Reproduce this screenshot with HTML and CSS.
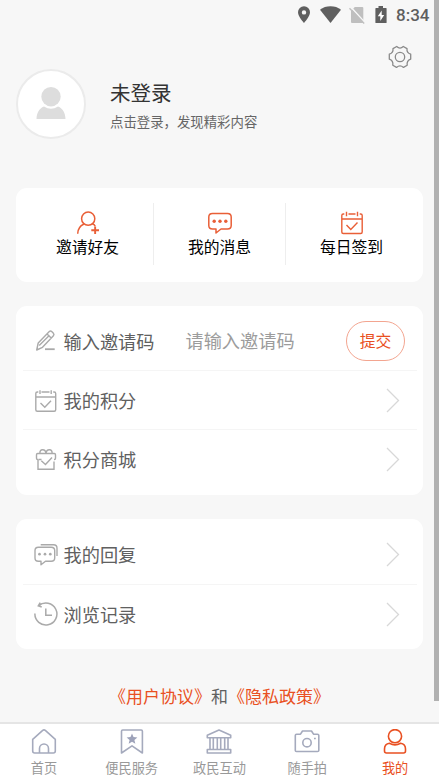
FILE: index.html
```html
<!DOCTYPE html>
<html lang="zh-CN">
<head>
<meta charset="UTF-8">
<meta name="viewport" content="width=device-width, initial-scale=1">
<title>我的</title>
<link rel="stylesheet" href="styles.css">
</head>
<body>
<div class="app">
  <header class="status">
    <svg class="s-pin" width="12" height="18" viewBox="0 0 12 18"><path fill="#5f5f5f" fill-rule="evenodd" d="M6 .3A6 6 0 0 0 0 6.300C0 10.500 6 17 6 17S12 10.500 12 6.300A6 6 0 0 0 6 .3ZM6 4.200A2.200 2.200 0 1 1 6 8.600A2.200 2.200 0 0 1 6 4.200Z"/></svg>
    <svg class="s-wifi" width="21" height="18" viewBox="0 0 21 18"><path fill="#5f5f5f" d="M10.500 17 0 3.700Q4.500.3 10.500.3T21 3.700Z"/></svg>
    <svg class="s-sim" width="16" height="18" viewBox="0 0 16 18"><path fill="#bfbfbf" d="M5.800 1H13.300Q14.300 1 14.300 2V16Q14.300 17 13.300 17H3Q2 17 2 16V5Z"/><path stroke="#f7f7f7" stroke-width="1.500" d="m1.800 1 14 15.300"/><path stroke="#bfbfbf" stroke-width="1.300" d="m.5 2.200 14.700 15.300"/></svg>
    <svg class="s-battery" width="12" height="18" viewBox="0 0 12 18"><path fill="#5f5f5f" d="M3.500 0h4.500v2H11q.6 0 .6.600V16.400q0 .6-.6.600H1q-.6 0-.6-.6V2.600Q.4 2 1 2h2.500Z"/><path fill="#fff" d="M6.700 4.500 2.800 10.200H5.300V15L9.200 8.900H6.700Z"/></svg>
    <span class="clock">8:34</span>
  </header>

  <main>
    <div class="tools">
      <svg width="26" height="26" viewBox="-13 -13 26 26" fill="none" stroke="#8a8a8a" stroke-width="1.300" stroke-linejoin="round"><path d="M-3.300-10.500Q0-7.300 3.300-10.500L7-8.400Q6.500-4.200 10.700-2.800V2.200Q6.500 3.800 7.200 8.200L3.500 10.400Q0 7.300-3.500 10.400L-7.200 8.200Q-6.500 3.800-10.700 2.200V-2.800Q-6.500-4.200-7-8.400Z"/><circle r="4.700"/></svg>
    </div>

    <section class="profile">
      <div class="avatar">
        <svg width="30" height="32" viewBox="0 0 30 32" fill="#ddd"><circle cx="15" cy="9.700" r="9.700"/><path d="M8 19.500Q15 24 22 19.500C27 21.500 29.300 26 29.500 32H.5C.7 26 3 21.500 8 19.500Z"/></svg>
      </div>
      <div class="who"><h1>未登录</h1><p>点击登录，发现精彩内容</p></div>
    </section>

    <section class="card actions">
      <a class="action">
        <svg width="24" height="24" viewBox="0 0 24 24" fill="none" stroke="#e95f37" stroke-width="1.500"><circle cx="12.200" cy="7.700" r="6.600"/><path d="M1.700 22.800C1.700 17.500 4.200 14.800 8 13M16.200 12.800Q18.500 13.300 19.200 15.200"/><path stroke-width="1.900" d="M15.300 19.200H23M19.150 15.500V23"/></svg>
        <span>邀请好友</span>
      </a>
      <a class="action">
        <svg width="24" height="24" viewBox="0 0 24 24" fill="none" stroke="#e95f37" stroke-width="1.500" stroke-linejoin="round"><path d="M4.500 2.500H19.500Q23.200 2.500 23.200 6V14.500Q23.200 18 19.500 18H13L8 22V18H4.500Q.8 18 .8 14.500V6Q.8 2.500 4.500 2.500Z"/><g fill="#e95f37" stroke="none"><circle cx="6.200" cy="10.200" r="1.700"/><circle cx="12" cy="10.200" r="1.700"/><circle cx="17.800" cy="10.200" r="1.700"/></g></svg>
        <span>我的消息</span>
      </a>
      <a class="action">
        <svg width="24" height="24" viewBox="0 0 24 24" fill="none" stroke="#e95f37" stroke-width="1.400"><path d="M4.300 3H3.300Q1.800 3 1.800 4.500V21Q1.800 22.500 3.300 22.500H20.700Q22.200 22.500 22.200 21V4.500Q22.200 3 20.700 3H19.700M8.500 3H15.500M1.800 8H22.200M6.500.8V5.200M17.500.8V5.200"/><path d="M6.500 14 10.800 18.500 17.500 11.500"/></svg>
        <span>每日签到</span>
      </a>
    </section>

    <section class="card list">
      <div class="row invite">
        <svg class="icon" width="24" height="24" viewBox="0 0 24 24" fill="none" stroke="#aaa" stroke-width="1.400" stroke-linejoin="round"><path d="M2.700 21 4.200 14 15.300 2.600Q16.500 1.500 17.700 2.600L19.400 4.300Q20.500 5.500 19.400 6.700L8.500 18.300 2.700 21ZM13 5 17.200 9.100M5.200 16.500 15.500 6.300"/><path stroke-width="1.800" d="M11 20.200H20.700"/></svg>
        <span class="label">输入邀请码</span>
        <input class="code" type="text" placeholder="请输入邀请码">
        <button class="submit" type="button">提交</button>
      </div>
      <div class="row">
        <svg class="icon" width="24" height="24" viewBox="0 0 24 24" fill="none" stroke="#aaa" stroke-width="1.400"><path d="M4.300 3H3.300Q1.800 3 1.800 4.500V20.700Q1.800 22.200 3.300 22.200H20.200Q21.700 22.200 21.700 20.700V4.500Q21.700 3 20.200 3H19.200M7.500 3H15.500M1.800 8H21.700M6 1.200V5M17.200 1.200V5"/><path d="M6.500 14 10.800 18.300 17 11.700"/></svg>
        <span class="label">我的积分</span>
        <svg class="chevron" width="14" height="25" viewBox="0 0 14 25"><path d="M1 1 12.500 12.500 1 24"/></svg>
      </div>
      <div class="row">
        <svg class="icon" width="24" height="24" viewBox="0 0 24 24" fill="none" stroke="#aaa" stroke-width="1.400"><path d="M4 11.500H3.700Q2.500 11.500 2.500 10.300V6.700Q2.500 5.500 3.700 5.500H20.300Q21.500 5.500 21.500 6.700V10.300Q21.500 11.500 20.300 11.500H20M6 5.500C5 .8 11.500.2 12 5.500C12.500.2 19 .8 18 5.500M4.500 11.500H7.500M4 11.500V21.200H20V13.500"/><path d="M7.300 12.700 11.500 16.500 18 9.500"/></svg>
        <span class="label">积分商城</span>
        <svg class="chevron" width="14" height="25" viewBox="0 0 14 25"><path d="M1 1 12.500 12.500 1 24"/></svg>
      </div>
    </section>

    <section class="card list">
      <div class="row">
        <svg class="icon" width="24" height="24" viewBox="0 0 24 24" fill="none" stroke="#aaa" stroke-width="1.400" stroke-linejoin="round"><path d="M4.300 4.200H17.200Q20.700 4.200 20.700 7.500V15Q20.700 18.200 17.200 18.200H11.500L7 21.700V18.200H4.300Q1 18.200 1 15V7.500Q1 4.200 4.300 4.200ZM6.700 1.800H19.500Q23 1.800 23 5.200V13"/><g fill="#aaa" stroke="none"><circle cx="5.500" cy="11.200" r="1.350"/><circle cx="11" cy="11.200" r="1.350"/><circle cx="16.300" cy="11.200" r="1.350"/></g></svg>
        <span class="label">我的回复</span>
        <svg class="chevron" width="14" height="25" viewBox="0 0 14 25"><path d="M1 1 12.500 12.500 1 24"/></svg>
      </div>
      <div class="row">
        <svg class="icon" width="24" height="24" viewBox="0 0 24 24" fill="none" stroke="#aaa" stroke-width="1.500"><path d="M.9 11.500A11 11 0 1 0 4.800 3.600M7.600 1.900A11 11 0 0 0 4.800 3.600M6.200.7 4.300 3.800 7.700 5M11.800 6.500V13.200H18"/></svg>
        <span class="label">浏览记录</span>
        <svg class="chevron" width="14" height="25" viewBox="0 0 14 25"><path d="M1 1 12.500 12.500 1 24"/></svg>
      </div>
    </section>

    <p class="legal"><a>《用户协议》</a>和<a>《隐私政策》</a></p>
  </main>

  <nav class="tabs">
    <a class="tab">
      <svg width="26" height="26" viewBox="0 0 26 26"><path d="M1.700 10.300 11.700 1.400Q13 .3 14.300 1.400L24.300 10.300V22Q24.300 24 22.300 24H3.700Q1.700 24 1.700 22ZM8.500 24V19.500A4.500 4.500 0 0 1 17.500 19.500V24"/></svg>
      <span>首页</span>
    </a>
    <a class="tab">
      <svg width="26" height="26" viewBox="0 0 26 26"><path d="M3.700 1H22.200Q23.400 1 23.400 2.200V24L13 16.800 2.500 24V2.200Q2.500 1 3.700 1Z"/><path fill="#9da2b9" stroke="none" d="m13 4.500 1.500 3.600 3.900.3-3 2.500.95 3.800L13 12.700 9.650 14.700l.95-3.800L7.600 8.400l3.900-.3Z"/></svg>
      <span>便民服务</span>
    </a>
    <a class="tab">
      <svg width="26" height="26" viewBox="0 0 26 26"><path d="M1.300 6.300 13 1 24.700 6.300V8.800H1.300ZM1.300 20.500H24.700V24H1.300ZM4 9V20.500M7.300 9V20.500M11.300 9V20.500M14.700 9V20.500M18.700 9V20.500M22 9V20.500"/></svg>
      <span>政民互动</span>
    </a>
    <a class="tab">
      <svg width="26" height="26" viewBox="0 0 26 26"><path d="M2.500 5.200H6.500L8.500 2H17.500L19.500 5.200H23.500Q24.800 5.200 24.800 6.500V21.500Q24.800 22.500 23.500 22.500H2.500Q1.300 22.500 1.300 21.500V6.500Q1.300 5.200 2.500 5.200Z"/><circle cx="13" cy="13.700" r="4.200"/><path d="M20 9.500H21.800"/></svg>
      <span>随手拍</span>
    </a>
    <a class="tab active">
      <svg width="26" height="26" viewBox="0 0 26 26"><circle cx="13" cy="7.200" r="6.600"/><path d="M7.500 14.200Q13 17.500 18.500 14.200Q23.500 15 23.500 20V22Q23.500 24 21.500 24H4.500Q2.500 24 2.500 22V20Q2.500 15 7.500 14.200Z"/></svg>
      <span>我的</span>
    </a>
  </nav>
  <div class="scrollbar"></div>
</div>
</body>
</html>
```
FILE: styles.css
```css
* { box-sizing: border-box; }

body {
  margin: 0;
  background: #f7f7f7;
  font-family: "Noto Sans CJK SC", sans-serif;
  color: #606060;
}

h1, p { margin: 0; font-weight: 400; }
svg { display: block; flex: none; }

.app {
  position: relative;
  height: 780px;
  display: flex;
  flex-direction: column;
  overflow: hidden;
}

.status {
  height: 30px;
  padding: 6px 9px 0 0;
  display: flex;
  justify-content: flex-end;
  align-items: flex-start;
}
.s-wifi { margin-left: 10px; }
.s-sim { margin-left: 8px; }
.s-battery { margin-left: 10px; }
.clock {
  width: 34px;
  margin: -1px 0 0 9px;
  font: 500 17px/20px Roboto, sans-serif;
  color: #5f5f5f;
  white-space: nowrap;
}

main {
  flex: 1;
  min-height: 0;
  padding: 0 16px;
}

.tools {
  height: 39px;
  padding: 14px 10px 0 0;
  display: flex;
  justify-content: flex-end;
}

.profile { height: 119px; display: flex; }
.avatar {
  width: 70px;
  height: 70px;
  border: 2px solid #ebebeb;
  border-radius: 50%;
  background: #fff;
  display: flex;
  justify-content: center;
  padding-top: 16px;
}
.who { margin-left: 24px; padding-top: 8px; }
.who h1 { font-size: 20.5px; line-height: 30px; color: #333; }
.who p { margin-top: 4px; font-size: 13.4px; line-height: 20px; color: #666; }

.card { background: #fff; border-radius: 11px; }

.actions {
  height: 93.500px;
  display: flex;
  align-items: center;
  padding: 0 6px 1px;
}
.action {
  flex: 1;
  height: 62px;
  padding-top: 8px;
  display: flex;
  flex-direction: column;
  align-items: center;
  font-size: 15.8px;
  line-height: 23px;
  color: #000;
}
.action + .action { border-left: 1px solid #eee; }

.list { margin-top: 24px; padding: 6px 6.500px; }
.actions + .list { margin-top: 24.500px; padding: 5px 6.500px 7px; }
.row {
  height: 59px;
  padding: 0 11.500px 0 11px;
  display: flex;
  align-items: center;
  font-size: 18.2px;
  line-height: 28px;
}
.actions + .list .icon { margin-top: 1px; }
.row + .row { border-top: 1px solid #f5f5f5; }
.label { margin-left: 6px; padding-bottom: 1px; white-space: nowrap; }
.invite .label { padding: 1px 0 0; }
.chevron {
  margin: 0 5.500px 0 auto;
  fill: none;
  stroke: #d8d8d8;
  stroke-width: 1.300;
}
.code {
  width: 130px;
  height: 30px;
  margin: 0 0 2px 31px;
  padding: 0;
  border: 0;
  outline: 0;
  background: none;
  font: inherit;
}
.code::placeholder { color: #9c9c9c; opacity: 1; }
.submit {
  width: 59px;
  height: 40px;
  margin-left: auto;
  padding: 0;
  border: 1px solid #f3a590;
  border-radius: 20px;
  background: #fff;
  color: #e95022;
  font-family: inherit;
  font-size: 15.8px;
}

.legal {
  margin-top: 34px;
  text-align: center;
  font-size: 17px;
  line-height: 25px;
  white-space: nowrap;
  text-spacing-trim: space-all;
}
.legal a { color: #e95022; }

.tabs {
  height: 58px;
  border-top: 2px solid #e5e5e5;
  background: #fff;
  display: flex;
}
.tab {
  flex: 1;
  padding-top: 5px;
  display: flex;
  flex-direction: column;
  align-items: center;
  font-size: 13.2px;
  line-height: 20px;
  color: #999;
}
.tab span { margin-top: 3px; }
.tab svg { fill: none; stroke: #a5aabd; stroke-width: 1.600; stroke-linejoin: round; }
.tab.active { color: #e95022; }
.tab.active svg { stroke: #e95022; }

.scrollbar {
  position: absolute;
  top: 0;
  right: 0;
  width: 5px;
  height: 701px;
  background: #b1b1b1;
}
```
